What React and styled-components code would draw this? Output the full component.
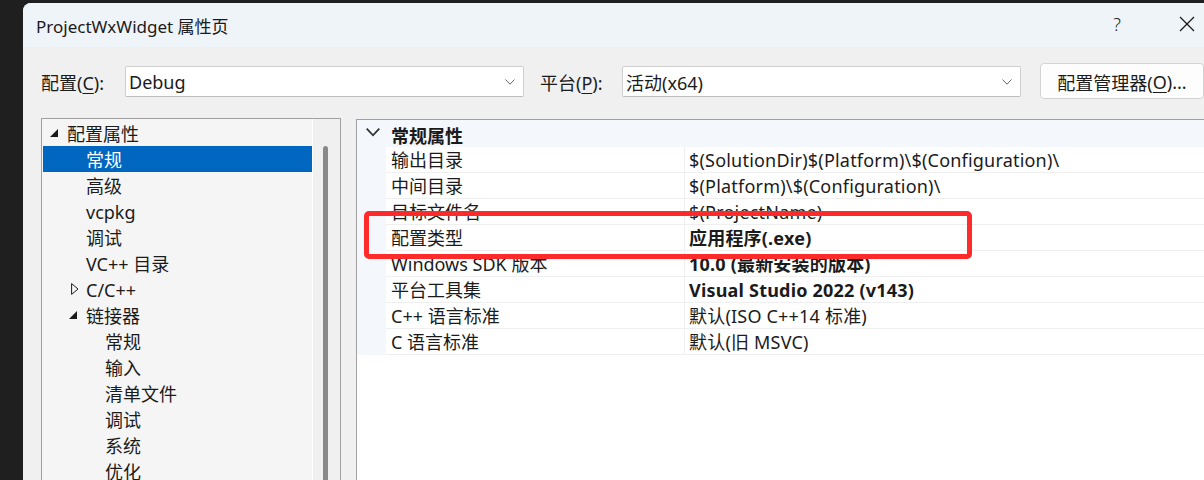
import React from "react";
import styled, { createGlobalStyle } from "styled-components";

const GlobalStyle = createGlobalStyle`
  html, body {
    margin: 0;
    padding: 0;
    background: #1f1f1f;
    overflow: hidden;
  }
  * { box-sizing: border-box; }
`;

const FONT = `"Noto Sans", "Noto Sans CJK SC", sans-serif`;

const treeItems = [
  { label: "配置属性", level: 0, toggle: "open" },
  { label: "常规", level: 1, selected: true },
  { label: "高级", level: 1 },
  { label: "vcpkg", level: 1 },
  { label: "调试", level: 1 },
  { label: "VC++ 目录", level: 1 },
  { label: "C/C++", level: 1, toggle: "closed" },
  { label: "链接器", level: 1, toggle: "open" },
  { label: "常规", level: 2 },
  { label: "输入", level: 2 },
  { label: "清单文件", level: 2 },
  { label: "调试", level: 2 },
  { label: "系统", level: 2 },
  { label: "优化", level: 2 },
];

const props = [
  { name: "输出目录", value: "$(SolutionDir)$(Platform)\\$(Configuration)\\" },
  { name: "中间目录", value: "$(Platform)\\$(Configuration)\\" },
  { name: "目标文件名", value: "$(ProjectName)" },
  { name: "配置类型", value: "应用程序(.exe)", bold: true },
  { name: "Windows SDK 版本", value: "10.0 (最新安装的版本)", bold: true },
  { name: "平台工具集", value: "Visual Studio 2022 (v143)", bold: true },
  { name: "C++ 语言标准", value: "默认(ISO C++14 标准)" },
  { name: "C 语言标准", value: "默认(旧 MSVC)" },
];

const Chevron = ({ size = 10, color = "#666", width = 1 }) => (
  <svg width={size} height={size * 0.6} viewBox="0 0 10 6">
    <polyline points="0.5,0.5 5,5.2 9.5,0.5" fill="none" stroke={color} strokeWidth={width} />
  </svg>
);

const ToggleIcon = ({ kind }) =>
  kind === "open" ? (
    <svg width="8" height="8" viewBox="0 0 8 8">
      <polygon points="8,0 8,8 0,8" fill="#1a1a1a" />
    </svg>
  ) : (
    <ClosedIcon width="8" height="12" viewBox="0 0 8 12">
      <polygon points="0.6,0.6 7,6 0.6,11.4" fill="none" stroke="#1a1a1a" strokeWidth="1" />
    </ClosedIcon>
  );

export default function App() {
  return (
    <>
      <GlobalStyle />
      <Page>
        <Dialog>
          <TitleBar>
            <Title>ProjectWxWidget 属性页</Title>
            <TitleButtons>
              <Help>?</Help>
              <svg width="16" height="16" viewBox="0 0 16 16">
                <line x1="1" y1="1" x2="15" y2="15" stroke="#1a1a1a" strokeWidth="1.2" />
                <line x1="15" y1="1" x2="1" y2="15" stroke="#1a1a1a" strokeWidth="1.2" />
              </svg>
            </TitleButtons>
          </TitleBar>

          <Body>
            <ConfigRow>
              <Label $w={84}>
                配置(<u>C</u>):
              </Label>
              <Select>
                <span>Debug</span>
                <Chevron />
              </Select>
              <Label $w={82} $ml={16}>
                平台(<u>P</u>):
              </Label>
              <Select>
                <span>活动(x64)</span>
                <Chevron />
              </Select>
              <Button>
                配置管理器(<u>O</u>)...
              </Button>
            </ConfigRow>

            <Main>
              <TreePanel>
                <Tree>
                  {treeItems.map((item, i) => (
                    <TreeRow key={i} $level={item.level} $selected={item.selected}>
                      <ToggleSlot>{item.toggle && <ToggleIcon kind={item.toggle} />}</ToggleSlot>
                      <TreeLabel>{item.label}</TreeLabel>
                    </TreeRow>
                  ))}
                </Tree>
                <ScrollTrack>
                  <Thumb />
                </ScrollTrack>
              </TreePanel>

              <GridPanel>
                <GroupHeader>
                  <GroupChevron>
                    <Chevron size={14} color="#333" width={1.3} />
                  </GroupChevron>
                  <HeaderText>常规属性</HeaderText>
                </GroupHeader>
                {props.map((p) => (
                  <PropRow key={p.name}>
                    <Gutter />
                    <PropName>{p.name}</PropName>
                    <PropValue $bold={p.bold}>{p.value}</PropValue>
                  </PropRow>
                ))}
                <Highlight />
              </GridPanel>
            </Main>
          </Body>
        </Dialog>
      </Page>
    </>
  );
}

const Page = styled.div`
  width: 1204px;
  height: 480px;
  padding: 3px 0 0 23px;
  background: #1f1f1f;
  overflow: hidden;
  font-family: ${FONT};
  color: #1b1b1b;
`;

const Dialog = styled.div`
  width: 1181px;
  height: 520px;
  border-radius: 8px 0 0 0;
  overflow: hidden;
  background: #f0f0f0;
  display: flex;
  flex-direction: column;
`;

const TitleBar = styled.div`
  height: 44px;
  flex: none;
  background: #eff4f9;
  display: flex;
  align-items: center;
  padding: 0 9px 0 13px;
`;

const Title = styled.div`
  font-size: 17px;
  margin-top: 0;
`;

const TitleButtons = styled.div`
  margin-left: auto;
  display: flex;
  align-items: center;
  gap: 58px;
  margin-top: -3px;
`;

const Help = styled.span`
  font-size: 18px;
  font-weight: 300;
  color: #222;
`;

const Body = styled.div`
  padding: 16px 0 0 18px;
  flex: 1;
  display: flex;
  flex-direction: column;
`;

const ConfigRow = styled.div`
  display: flex;
  align-items: center;
  height: 36px;
  font-size: 18px;
`;

const Label = styled.div`
  width: ${(p) => p.$w}px;
  margin-left: ${(p) => p.$ml || 0}px;
  padding-top: 2px;
  flex: none;

  u {
    text-underline-offset: 3px;
    text-decoration-thickness: 1px;
  }
`;

const Select = styled.div`
  width: 399px;
  height: 31px;
  flex: none;
  background: #fff;
  border: 1px solid #cfcfcf;
  border-bottom-color: #bdbdbd;
  border-radius: 2px;
  display: flex;
  align-items: center;
  justify-content: space-between;
  padding: 2px 8px 0 3px;
`;

const Button = styled.div`
  margin-left: 19px;
  width: 164px;
  height: 36px;
  flex: none;
  background: #fdfdfd;
  border: 1px solid #d3d3d3;
  border-radius: 4px;
  display: flex;
  align-items: center;
  justify-content: center;
  padding-top: 1px;

  u {
    text-underline-offset: 3px;
    text-decoration-thickness: 1px;
  }
`;

const Main = styled.div`
  margin-top: 19px;
  flex: 1;
  display: flex;
  gap: 15px;
  min-height: 0;
`;

const TreePanel = styled.div`
  width: 300px;
  flex: none;
  border: 1px solid #a0a0a0;
  border-bottom: none;
  display: flex;
  background: #f0f0f0;
`;

const Tree = styled.div`
  width: 271px;
  background: #f5f5f5;
  padding-top: 1px;
  border-right: 1px solid #ffffff;
`;

const TreeRow = styled.div`
  height: 26px;
  font-size: 18px;
  display: flex;
  align-items: center;
  white-space: nowrap;
  margin-left: 1px;
  padding-left: ${(p) => 7 + p.$level * 19}px;
  background: ${(p) => (p.$selected ? "#0067c0" : "transparent")};
  color: ${(p) => (p.$selected ? "#ffffff" : "#1b1b1b")};
`;

const TreeLabel = styled.span`
  line-height: 26px;
  padding-top: 2px;
`;

const ToggleSlot = styled.span`
  width: 17px;
  flex: none;
  display: flex;
  align-items: center;
`;

const ClosedIcon = styled.svg`
  margin-left: 2px;
`;

const ScrollTrack = styled.div`
  flex: 1;
  padding: 27px 0 0 10px;
`;

const Thumb = styled.div`
  width: 5px;
  height: 400px;
  border-radius: 3px;
  background: #8a8a8a;
`;

const GridPanel = styled.div`
  position: relative;
  flex: 1;
  margin-top: 1px;
  border-left: 1px solid #a0a0a0;
  border-top: 1px solid #a0a0a0;
  background: #ffffff;
`;

const GroupHeader = styled.div`
  height: 27px;
  background: #f4f7fb;
  display: flex;
  align-items: center;
  font-size: 18px;
  font-weight: 700;
  padding-left: 9px;
`;

const HeaderText = styled.span`
  padding-top: 2px;
`;

const GroupChevron = styled.span`
  width: 25px;
  display: flex;
  align-items: center;
  margin-top: -2px;
`;

const PropRow = styled.div`
  height: 26px;
  display: flex;
  font-size: 18px;
  white-space: nowrap;
`;

const Gutter = styled.div`
  width: 29px;
  flex: none;
  background: #f4f7fb;
`;

const PropName = styled.div`
  width: 299px;
  flex: none;
  padding: 2px 0 0 5px;
  line-height: 23px;
  border-bottom: 1px solid #efefef;
  border-right: 1px solid #efefef;
`;

const PropValue = styled.div`
  flex: 1;
  padding: 2px 0 0 4px;
  line-height: 23px;
  letter-spacing: 0.2px;
  border-bottom: 1px solid #efefef;
  font-weight: ${(p) => (p.$bold ? 700 : 400)};
`;

const Highlight = styled.div`
  position: absolute;
  left: 7px;
  top: 91px;
  width: 608px;
  height: 48px;
  border: 5px solid #ff2b2b;
  border-radius: 5px;
  pointer-events: none;
`;
